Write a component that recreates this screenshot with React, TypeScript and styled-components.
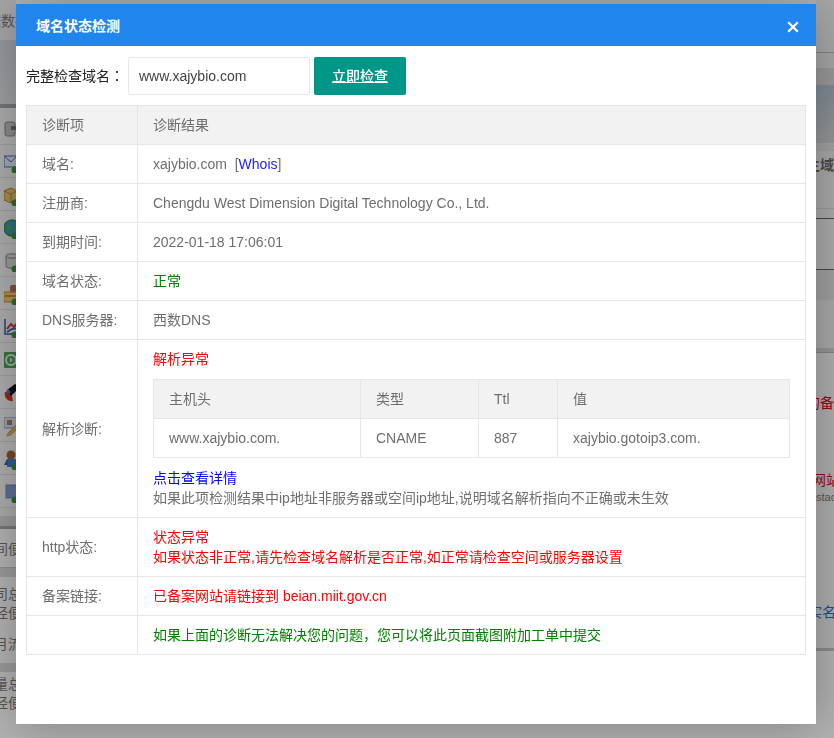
import React from "react";
import styled, { createGlobalStyle } from "styled-components";

const GlobalStyle = createGlobalStyle`
  html, body {
    margin: 0;
    padding: 0;
    height: 100%;
    overflow: hidden;
    background: #fff;
  }
  body, input, button {
    font-family: "Liberation Sans", "Noto Sans CJK SC", sans-serif;
    font-size: 14px;
  }
`;

/* page behind the dialog, only the two edges are visible */
const Page = styled.div`
  display: flex;
  justify-content: space-between;
  width: 834px;
  height: 738px;
  overflow: hidden;
`;

const Strip = styled.div<{ $w: number }>`
  display: flex;
  flex-direction: column;
  flex: none;
  width: ${(p) => p.$w}px;
  overflow: hidden;
`;

const Band = styled.div<{ $h: number; $bg?: string; $line?: string }>`
  flex: none;
  display: flex;
  align-items: center;
  box-sizing: border-box;
  height: ${(p) => p.$h}px;
  background: ${(p) => p.$bg || "transparent"};
  border-bottom: ${(p) => (p.$line ? `1px solid ${p.$line}` : "none")};
`;

const Clip = styled.span<{ $shift: number; $color?: string; $bold?: boolean; $size?: number }>`
  flex: none;
  margin-left: ${(p) => p.$shift}px;
  white-space: nowrap;
  color: ${(p) => p.$color || "#7a7a7a"};
  font-size: ${(p) => p.$size || 14}px;
  font-weight: ${(p) => (p.$bold ? 700 : 400)};
`;

const MenuRow = styled.div`
  flex: none;
  box-sizing: border-box;
  height: 33px;
  padding: 8px 0 0 4px;
  border-bottom: 1px solid #e0e0e0;
  background: #f8f8f8;
`;

const MenuIcon = styled.svg`
  display: block;
  width: 20px;
  height: 20px;
`;

const Badge = () => <circle cx="11" cy="17" r="3.5" fill="#3f9a3f" />;

const menuIcons = [
  <>
    <rect x="1" y="2" width="10" height="14" rx="2" fill="#c6c6c6" stroke="#8a8a8a" />
    <rect x="7" y="6" width="5" height="4" fill="#777" />
  </>,
  <>
    <rect x="0" y="3" width="13" height="11" fill="#e8eefb" stroke="#4a6fc0" />
    <path d="M0 3l7 6 6-6" fill="none" stroke="#4a6fc0" />
    <Badge />
  </>,
  <>
    <path d="M0 5l7-3 6 3v9l-6 3-7-3z" fill="#efc66e" stroke="#b98a2c" />
    <path d="M0 5l7 3 6-3M7 8v9" fill="none" stroke="#b98a2c" />
    <Badge />
  </>,
  <>
    <circle cx="8" cy="9" r="8" fill="#3f9ad0" stroke="#3b9a3b" strokeWidth="1.5" />
    <path d="M3 5l5 2-1 5-4-2zM10 10l4 1-3 4z" fill="#58b44a" />
    <Badge />
  </>,
  <>
    <path d="M2 4c0-3 12-3 12 0v10c0 3-12 3-12 0z" fill="#dedede" stroke="#8c8c8c" />
    <path d="M2 4c0 3 12 3 12 0" fill="none" stroke="#8c8c8c" />
    <Badge />
  </>,
  <>
    <rect x="6" y="0" width="7" height="7" rx="2" fill="#b9705a" />
    <rect x="0" y="7" width="14" height="10" fill="#f4d27a" stroke="#c48f25" />
    <rect x="1" y="10" width="13" height="2" fill="#e08a3c" />
    <Badge />
  </>,
  <>
    <path d="M1 1v15h14" fill="none" stroke="#3a5cb0" strokeWidth="1.5" />
    <path d="M3 11l4-5 3 3 5-6" fill="none" stroke="#d33" strokeWidth="2" />
    <path d="M3 14l5-3 7-1" fill="none" stroke="#3a70c0" strokeWidth="2" />
    <Badge />
  </>,
  <>
    <rect x="0" y="1" width="16" height="16" fill="#4ea65a" />
    <circle cx="7" cy="9" r="5" fill="none" stroke="#e6f6e6" strokeWidth="2" />
    <path d="M6 6.5l3 2.5-3 2.5z" fill="#e6f6e6" />
  </>,
  <>
    <path d="M1 8a7 7 0 0 0 8 9l-2-9z" fill="#d83a20" />
    <path d="M3 6l8-6 5 3-9 9z" fill="#111" />
    <path d="M2 8l2-3 3 3-2 2z" fill="#2f7fd0" />
  </>,
  <>
    <rect x="0" y="0" width="13" height="11" fill="#dfe6f2" stroke="#8c9ab5" />
    <rect x="3" y="3" width="5" height="5" fill="#b9824a" />
    <path d="M4 16l11-11 3 2L7 18l-4 1z" fill="#e5b85c" stroke="#9a7a30" strokeWidth=".5" />
  </>,
  <>
    <circle cx="7" cy="5" r="4.5" fill="#a8663c" />
    <rect x="3" y="9" width="10" height="8" fill="#3f84d2" />
    <path d="M3 9l-3 6h4z" fill="#2e66ac" />
    <Badge />
  </>,
  <>
    <rect x="2" y="2" width="14" height="13" fill="#86a0d6" stroke="#7089c0" />
    <Badge />
  </>,
];

/* layer shade and dialog */
const Shade = styled.div`
  position: fixed;
  inset: 0;
  background: rgba(0, 0, 0, 0.3);
`;

const Dialog = styled.div`
  position: fixed;
  left: 16px;
  top: 4px;
  width: 800px;
  height: 720px;
  background: #fff;
  box-shadow: 1px 1px 50px rgba(0, 0, 0, 0.3);
`;

const DialogTitle = styled.div`
  display: flex;
  align-items: center;
  justify-content: space-between;
  height: 42px;
  padding: 0 16px 0 20px;
  background: #2185ee;
  color: #fff;
  font-weight: 700;
`;

const CloseIcon = styled.svg`
  display: block;
  width: 14px;
  height: 14px;
  margin-top: 4px;
`;

const DialogBody = styled.div`
  padding: 11px 10px 0;
`;

const SearchRow = styled.div`
  display: flex;
  align-items: center;
  height: 38px;
  color: #222;
`;

const SearchLabel = styled.label`
  width: 102px;
  flex: none;
  padding-bottom: 3px;
`;

const LabelColon = styled.span`
  font-family: "Noto Sans CJK TC", sans-serif;
`;

const SearchInput = styled.input`
  box-sizing: border-box;
  width: 182px;
  height: 38px;
  padding: 0 10px;
  border: 1px solid #e6e6e6;
  border-radius: 2px;
  outline: none;
  color: #444;
`;

const SearchButton = styled.button`
  box-sizing: border-box;
  width: 92px;
  height: 38px;
  margin-left: 4px;
  padding: 0 0 2px;
  border: none;
  border-radius: 2px;
  background: #009688;
  color: #fff;
  font-weight: 500;
  text-decoration: underline;
`;

const Table = styled.table<{ $nested?: boolean }>`
  width: 100%;
  margin: ${(p) => (p.$nested ? "10px 0" : "10px 0 0")};
  border-collapse: collapse;
  table-layout: fixed;
  color: #6e6e6e;
  line-height: 20px;

  th,
  td {
    padding: 9px 15px;
    border: 1px solid #e6e6e6;
    text-align: left;
    font-weight: 400;
  }

  thead tr {
    background: #f2f2f2;
  }
`;

const Tone = styled.div<{ $color: string }>`
  color: ${(p) => p.$color};
`;

const Inline = styled.span<{ $color: string }>`
  color: ${(p) => p.$color};
`;

const RED = "#ff0000";
const GREEN = "#008000";
const BLUE = "#0000ff";

export default function App() {
  return (
    <>
      <GlobalStyle />
      <Page>
        <Strip $w={16}>
          <Band $h={40} $bg="#eee">
            <Clip $shift={-13}>据数据</Clip>
          </Band>
          <Band $h={64} $bg="linear-gradient(#d5dae0, #e2e4e8)" />
          <Band $h={4} $bg="#a8a8a8" />
          <Band $h={4} $bg="#f8f8f8" />
          {menuIcons.map((icon, i) => (
            <MenuRow key={i}>
              <MenuIcon viewBox="0 0 20 20">{icon}</MenuIcon>
            </MenuRow>
          ))}
          <Band $h={8} $bg="#f4f4f4" />
          <Band $h={10} $bg="#dcdcdc" />
          <Band $h={3} $bg="#aaa" />
          <Band $h={39} $bg="#fff" $line="#ccc">
            <Clip $shift={-6}>间便</Clip>
          </Band>
          <Band $h={9} $bg="#dedede" />
          <Band $h={8} $bg="#fff" />
          <Band $h={16} $bg="#fff">
            <Clip $shift={-6}>司总</Clip>
          </Band>
          <Band $h={3} $bg="#fff" />
          <Band $h={16} $bg="#fff">
            <Clip $shift={-6}>经便</Clip>
          </Band>
          <Band $h={15} $bg="#fff" />
          <Band $h={16} $bg="#fff">
            <Clip $shift={-6}>月流</Clip>
          </Band>
          <Band $h={12} $bg="#fff" />
          <Band $h={9} $bg="#dedede" />
          <Band $h={3} $bg="#fff" />
          <Band $h={16} $bg="#fff">
            <Clip $shift={-6}>量总</Clip>
          </Band>
          <Band $h={3} $bg="#fff" />
          <Band $h={16} $bg="#fff">
            <Clip $shift={-6}>经便</Clip>
          </Band>
          <Band $h={28} $bg="#fff" />
        </Strip>
        <Strip $w={18}>
          <Band $h={53} $bg="#f2f2f2" $line="#bbb" />
          <Band $h={15} $bg="#efefef" />
          <Band $h={17} $bg="#dcdcdc" />
          <Band $h={58} $bg="linear-gradient(#b4c6d6, #d8d8d8)" />
          <Band $h={8} $bg="#e8e8e8" />
          <Band $h={25} $bg="#f2f2f2">
            <Clip $shift={-10} $bold $color="#6a6a6a">
              主域名
            </Clip>
          </Band>
          <Band $h={33} $bg="#f4f4f4" $line="#ddd" />
          <Band $h={10} $bg="#f4f4f4" $line="#666" />
          <Band $h={51} $bg="#f6f6f6" $line="#666" />
          <Band $h={30} $bg="#e6e6e6" />
          <Band $h={48} $bg="#f2f2f2" />
          <Band $h={5} $bg="#d8d8d8" $line="#bbb" />
          <Band $h={41} $bg="#fafafa" />
          <Band $h={16} $bg="#fafafa">
            <Clip $shift={-10} $color="#e40017">
              的备案
            </Clip>
          </Band>
          <Band $h={61} $bg="#fafafa" />
          <Band $h={16} $bg="#fafafa">
            <Clip $shift={-4} $color="#e40017">
              网站
            </Clip>
          </Band>
          <Band $h={20} $bg="#fafafa">
            <Clip $shift={0} $size={11}>
              stack
            </Clip>
          </Band>
          <Band $h={96} $bg="#fafafa" />
          <Band $h={16} $bg="#fafafa">
            <Clip $shift={-8} $color="#2c74c8">
              实名
            </Clip>
          </Band>
          <Band $h={29} $bg="#fafafa" />
          <Band $h={3} $bg="#c8c8c8" />
          <Band $h={87} $bg="#fff" />
        </Strip>
      </Page>
      <Shade />
      <Dialog>
        <DialogTitle>
          域名状态检测
          <CloseIcon viewBox="0 0 14 14">
            <path d="M2.2 2.2l9.6 9.6M11.8 2.2l-9.6 9.6" stroke="#fff" strokeWidth="2.2" fill="none" />
          </CloseIcon>
        </DialogTitle>
        <DialogBody>
          <SearchRow>
            <SearchLabel>
              完整检查域名
              <LabelColon>：</LabelColon>
            </SearchLabel>
            <SearchInput defaultValue="www.xajybio.com" />
            <SearchButton>立即检查</SearchButton>
          </SearchRow>
          <Table>
            <colgroup>
              <col width="111" />
              <col />
            </colgroup>
            <thead>
              <tr>
                <th>诊断项</th>
                <th>诊断结果</th>
              </tr>
            </thead>
            <tbody>
              <tr>
                <td>域名:</td>
                <td>
                  xajybio.com&nbsp;&nbsp;[<Inline $color="#2222ff">Whois</Inline>]
                </td>
              </tr>
              <tr>
                <td>注册商:</td>
                <td>Chengdu West Dimension Digital Technology Co., Ltd.</td>
              </tr>
              <tr>
                <td>到期时间:</td>
                <td>2022-01-18 17:06:01</td>
              </tr>
              <tr>
                <td>域名状态:</td>
                <td>
                  <Tone $color={GREEN}>正常</Tone>
                </td>
              </tr>
              <tr>
                <td>DNS服务器:</td>
                <td>西数DNS</td>
              </tr>
              <tr>
                <td>解析诊断:</td>
                <td>
                  <Tone $color={RED}>解析异常</Tone>
                  <Table $nested>
                    <colgroup>
                      <col width="207" />
                      <col width="118" />
                      <col width="79" />
                      <col />
                    </colgroup>
                    <thead>
                      <tr>
                        <th>主机头</th>
                        <th>类型</th>
                        <th>Ttl</th>
                        <th>值</th>
                      </tr>
                    </thead>
                    <tbody>
                      <tr>
                        <td>www.xajybio.com.</td>
                        <td>CNAME</td>
                        <td>887</td>
                        <td>xajybio.gotoip3.com.</td>
                      </tr>
                    </tbody>
                  </Table>
                  <Tone $color={BLUE}>点击查看详情</Tone>
                  如果此项检测结果中ip地址非服务器或空间ip地址,说明域名解析指向不正确或未生效
                </td>
              </tr>
              <tr>
                <td>http状态:</td>
                <td>
                  <Tone $color={RED}>状态异常</Tone>
                  <Tone $color={RED}>如果状态非正常,请先检查域名解析是否正常,如正常请检查空间或服务器设置</Tone>
                </td>
              </tr>
              <tr>
                <td>备案链接:</td>
                <td>
                  <Tone $color={RED}>已备案网站请链接到 beian.miit.gov.cn</Tone>
                </td>
              </tr>
              <tr>
                <td></td>
                <td>
                  <Tone $color={GREEN}>如果上面的诊断无法解决您的问题，您可以将此页面截图附加工单中提交</Tone>
                </td>
              </tr>
            </tbody>
          </Table>
        </DialogBody>
      </Dialog>
    </>
  );
}
